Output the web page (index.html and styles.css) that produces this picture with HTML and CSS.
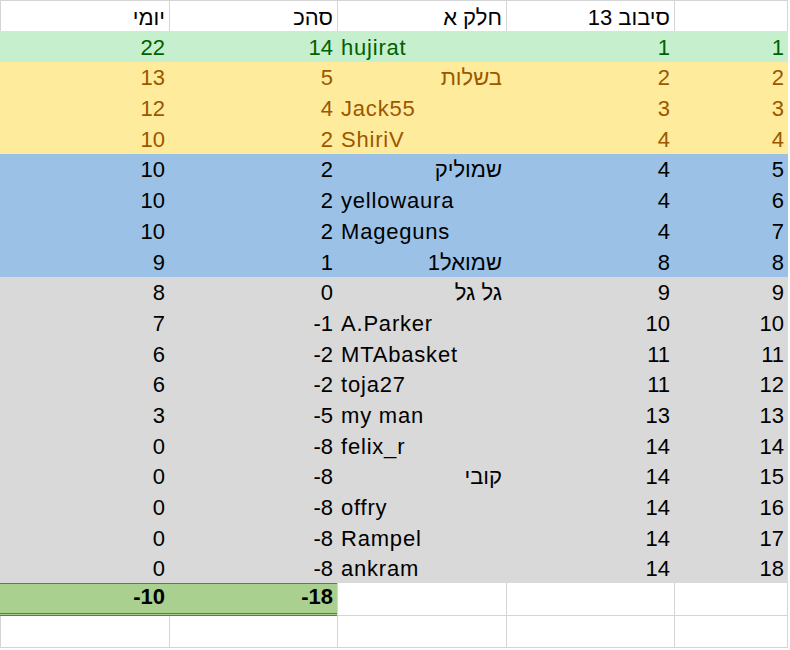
FILE: index.html
```html
<!DOCTYPE html>
<html lang="he">
<head>
<meta charset="utf-8">
<link rel="stylesheet" href="styles.css">
</head>
<body>
<div class="sheet" dir="rtl">
  <div class="row head">
    <div class="c"></div><div class="c">סיבוב 13</div><div class="c">חלק א</div><div class="c">סהכ</div><div class="c">יומי</div>
  </div>
  <div class="row good">
    <div class="c num">1</div><div class="c num">1</div><div class="c ltr">hujirat</div><div class="c num">14</div><div class="c num">22</div>
  </div>
  <div class="row neutral">
    <div class="c num">2</div><div class="c num">2</div><div class="c">בשלות</div><div class="c num">5</div><div class="c num">13</div>
  </div>
  <div class="row neutral">
    <div class="c num">3</div><div class="c num">3</div><div class="c ltr">Jack55</div><div class="c num">4</div><div class="c num">12</div>
  </div>
  <div class="row neutral">
    <div class="c num">4</div><div class="c num">4</div><div class="c ltr">ShiriV</div><div class="c num">2</div><div class="c num">10</div>
  </div>
  <div class="row blue">
    <div class="c num">5</div><div class="c num">4</div><div class="c">שמוליק</div><div class="c num">2</div><div class="c num">10</div>
  </div>
  <div class="row blue">
    <div class="c num">6</div><div class="c num">4</div><div class="c ltr">yellowaura</div><div class="c num">2</div><div class="c num">10</div>
  </div>
  <div class="row blue">
    <div class="c num">7</div><div class="c num">4</div><div class="c ltr">Mageguns</div><div class="c num">2</div><div class="c num">10</div>
  </div>
  <div class="row blue">
    <div class="c num">8</div><div class="c num">8</div><div class="c">שמואל1</div><div class="c num">1</div><div class="c num">9</div>
  </div>
  <div class="row gray">
    <div class="c num">9</div><div class="c num">9</div><div class="c">גל גל</div><div class="c num">0</div><div class="c num">8</div>
  </div>
  <div class="row gray">
    <div class="c num">10</div><div class="c num">10</div><div class="c ltr">A.Parker</div><div class="c num">-1</div><div class="c num">7</div>
  </div>
  <div class="row gray">
    <div class="c num">11</div><div class="c num">11</div><div class="c ltr">MTAbasket</div><div class="c num">-2</div><div class="c num">6</div>
  </div>
  <div class="row gray">
    <div class="c num">12</div><div class="c num">11</div><div class="c ltr">toja27</div><div class="c num">-2</div><div class="c num">6</div>
  </div>
  <div class="row gray">
    <div class="c num">13</div><div class="c num">13</div><div class="c ltr">my man</div><div class="c num">-5</div><div class="c num">3</div>
  </div>
  <div class="row gray">
    <div class="c num">14</div><div class="c num">14</div><div class="c ltr">felix_r</div><div class="c num">-8</div><div class="c num">0</div>
  </div>
  <div class="row gray">
    <div class="c num">15</div><div class="c num">14</div><div class="c">קובי</div><div class="c num">-8</div><div class="c num">0</div>
  </div>
  <div class="row gray">
    <div class="c num">16</div><div class="c num">14</div><div class="c ltr">offry</div><div class="c num">-8</div><div class="c num">0</div>
  </div>
  <div class="row gray">
    <div class="c num">17</div><div class="c num">14</div><div class="c ltr">Rampel</div><div class="c num">-8</div><div class="c num">0</div>
  </div>
  <div class="row gray">
    <div class="c num">18</div><div class="c num">14</div><div class="c ltr">ankram</div><div class="c num">-8</div><div class="c num">0</div>
  </div>
  <div class="row total">
    <div class="c blank"></div><div class="c blank"></div><div class="c blank"></div><div class="c num sum">-18</div><div class="c num sum">-10</div>
  </div>
  <div class="row empty">
    <div class="c blank"></div><div class="c blank"></div><div class="c blank"></div><div class="c blank"></div><div class="c blank"></div>
  </div>
</div>
</body>
</html>
```

FILE: styles.css
```css
* {
  box-sizing: border-box;
}

html, body {
  margin: 0;
  padding: 0;
  background: #ffffff;
}

.sheet {
  width: 788px;
  font-family: "Liberation Sans", Arial, "DejaVu Sans", sans-serif;
  font-size: 22px;
  line-height: 25px;
  color: #000000;
}

.row {
  display: grid;
  grid-template-columns: 114px 168px 169px 168px 169px;
  height: 30.7px;
}

.c {
  display: flex;
  align-items: flex-end;
  justify-content: flex-start;
  padding: 0 4px 2px 4px;
  white-space: nowrap;
  overflow: hidden;
}

.num {
  direction: ltr;
  unicode-bidi: isolate;
  justify-content: flex-end;
}

.ltr {
  direction: ltr;
  justify-content: flex-start;
  letter-spacing: 0.8px;
}

/* header row */
.head {
  height: 31px;
}

.head .c {
  box-shadow: inset 1px 1px 0 #d4d4d4;
  padding-bottom: 1px;
}

.head .c:first-child {
  box-shadow: inset 1px 1px 0 #d4d4d4, inset -1px 0 0 #d4d4d4;
}

/* conditional colours */
.good {
  background: #c6efce;
  color: #006100;
}

.neutral {
  background: #ffeb9c;
  color: #9c5700;
}

.blue {
  background: #9bc2e6;
}

.gray {
  background: #d9d9d9;
}

/* total row */
.total {
  height: 33px;
}

.blank {
  background: #ffffff;
  box-shadow: inset 1px -1px 0 #d4d4d4;
}

.blank:first-child {
  box-shadow: inset 1px -1px 0 #d4d4d4, inset -1px 0 0 #d4d4d4;
}

.sum {
  background: #a9d08e;
  font-weight: bold;
  border-top: 1px solid #4472c4;
  border-bottom: 3px double #4472c4;
  padding-bottom: 4px;
}

.empty {
  height: 32px;
}
```
